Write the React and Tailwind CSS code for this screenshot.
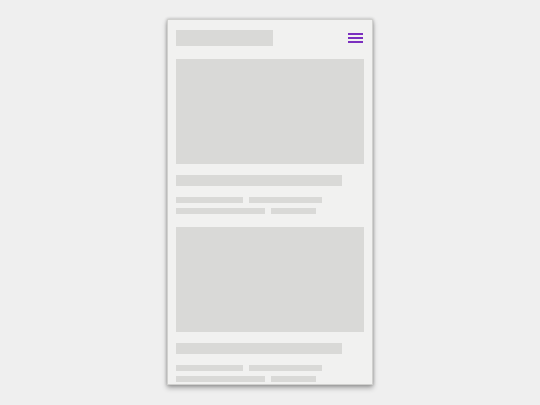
import React from "react";

const Bar = ({ className }) => <div className={`bg-[#d9d9d7] ${className}`} />;

const Post = () => (
  <div className="mt-[13px] flex flex-col">
    <Bar className="h-[105px] w-full" />
    <Bar className="mt-[11px] h-[11px] w-[166px]" />
    <div className="mt-[11px] flex gap-[6px]">
      <Bar className="h-[6px] w-[67px]" />
      <Bar className="h-[6px] w-[73px]" />
    </div>
    <div className="mt-[5px] flex gap-[6px]">
      <Bar className="h-[6px] w-[89px]" />
      <Bar className="h-[6px] w-[45px]" />
    </div>
  </div>
);

export default function App() {
  return (
    <div className="flex h-[405px] w-[540px] items-start justify-center bg-[#efefef] pt-[19px]">
      <div className="flex h-[366px] w-[206px] flex-col overflow-hidden border border-[#d0d0ce] bg-[#f1f1f0] px-[8px] pt-[10px] shadow-[0_0_3px_rgba(0,0,0,0.25),0_3px_5px_rgba(0,0,0,0.3)]">
        {/* header */}
        <div className="flex h-[16px] items-center justify-between">
          <Bar className="h-[16px] w-[97px]" />
          <div className="mr-[1px] flex w-[15px] flex-col gap-[2.5px]">
            <span className="h-[1.7px] w-full bg-[#7b2fbf]" />
            <span className="h-[1.7px] w-full bg-[#7b2fbf]" />
            <span className="h-[1.7px] w-full bg-[#7b2fbf]" />
          </div>
        </div>
        <Post />
        <Post />
      </div>
    </div>
  );
}
